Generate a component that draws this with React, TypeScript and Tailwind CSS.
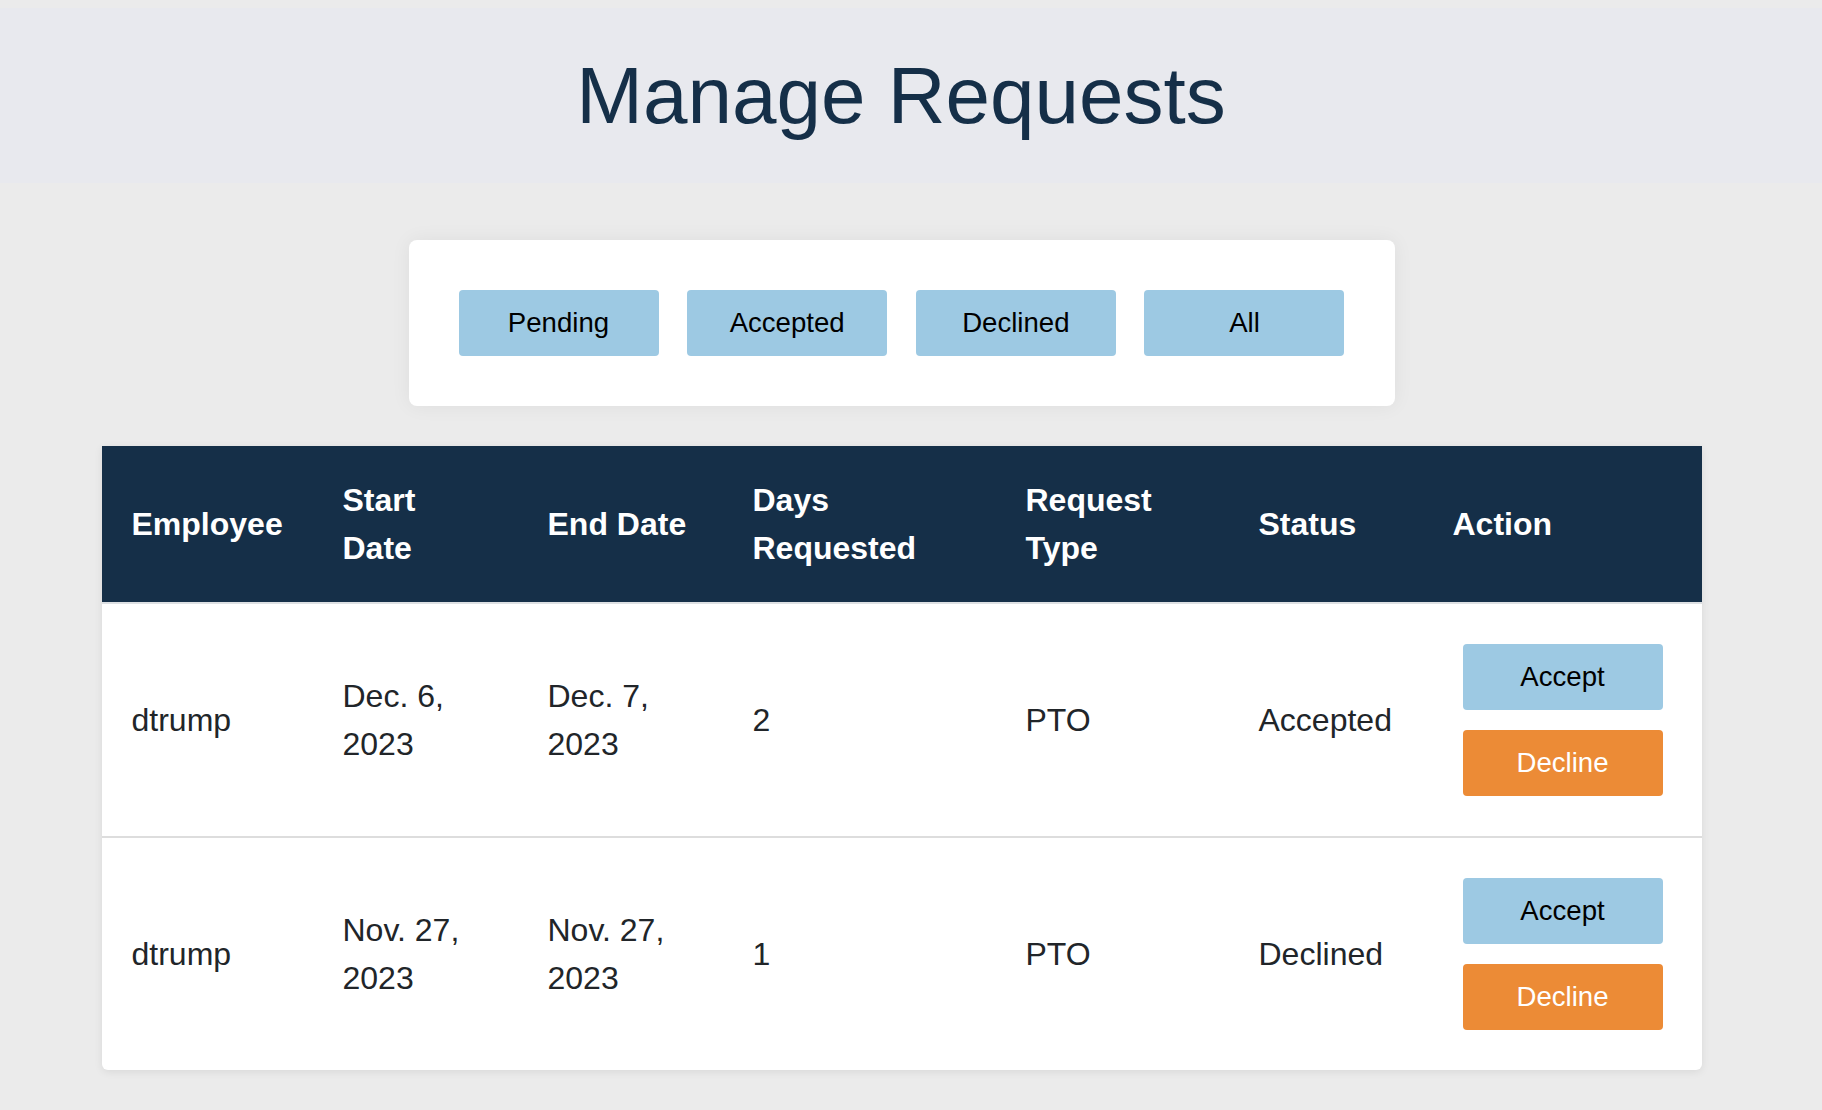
import React from 'react';

const filters = ['Pending', 'Accepted', 'Declined', 'All'];

const requests = [
  { employee: 'dtrump', start: 'Dec. 6, 2023', end: 'Dec. 7, 2023', days: 2, type: 'PTO', status: 'Accepted' },
  { employee: 'dtrump', start: 'Nov. 27, 2023', end: 'Nov. 27, 2023', days: 1, type: 'PTO', status: 'Declined' },
];

const headers = ['Employee', 'Start Date', 'End Date', 'Days Requested', 'Request Type', 'Status', 'Action'];

export default function App() {
  return (
    <div className="h-screen w-full overflow-hidden bg-[#ebebeb] pt-[8px] font-['Liberation_Sans',Arial,sans-serif]">
      <header className="flex h-[175px] items-center justify-center bg-[#e8e9ee] pr-[20px]">
        <h1 className="text-[80px] font-normal leading-none text-[#152f48]">Manage Requests</h1>
      </header>

      <main className="flex w-[1803px] flex-col items-center pt-[57px]">
        <div className="flex h-[166px] w-[986px] items-center justify-between rounded-[8px] bg-white px-[50px] shadow-[0_0_20px_rgba(0,0,0,0.06)]">
          {filters.map((f) => (
            <button
              key={f}
              className="flex h-[66px] w-[200px] items-center justify-center rounded-[4px] bg-[#9dc9e3] text-[27.6px] text-black"
            >
              {f}
            </button>
          ))}
        </div>

        <div className="mt-[40px] w-[1600px] overflow-hidden rounded-b-[6px] bg-white shadow-[0_2px_8px_rgba(0,0,0,0.08)]">
          <table className="w-[1600px] table-fixed text-[32px] leading-[48px]">
            <colgroup>
              <col className="w-[211px]" />
              <col className="w-[205px]" />
              <col className="w-[205px]" />
              <col className="w-[273px]" />
              <col className="w-[233px]" />
              <col className="w-[194px]" />
              <col className="w-[279px]" />
            </colgroup>
            <thead>
              <tr className="border-b-2 border-[#dde0e3] bg-[#152f48] text-white">
                {headers.map((h) => (
                  <th key={h} className="p-[30px] text-left align-middle font-bold">
                    {h}
                  </th>
                ))}
              </tr>
            </thead>
            <tbody className="text-[#212529]">
              {requests.map((r, i) => (
                <tr key={i} className={i < requests.length - 1 ? 'border-b-2 border-[#dddddd]' : ''}>
                  <td className="p-[30px] align-middle">{r.employee}</td>
                  <td className="p-[30px] align-middle">{r.start}</td>
                  <td className="p-[30px] align-middle">{r.end}</td>
                  <td className="p-[30px] align-middle">{r.days}</td>
                  <td className="p-[30px] align-middle">{r.type}</td>
                  <td className="p-[30px] align-middle">{r.status}</td>
                  <td className="p-[30px] align-middle">
                    <div className="flex flex-col gap-[20px] p-[10px]">
                      <button className="flex h-[66px] w-[200px] items-center justify-center rounded-[4px] bg-[#9dc9e3] text-[27.6px] leading-normal text-black">
                        Accept
                      </button>
                      <button className="flex h-[66px] w-[200px] items-center justify-center rounded-[4px] bg-[#ec8b36] text-[27.6px] leading-normal text-white">
                        Decline
                      </button>
                    </div>
                  </td>
                </tr>
              ))}
            </tbody>
          </table>
        </div>
      </main>
    </div>
  );
}
